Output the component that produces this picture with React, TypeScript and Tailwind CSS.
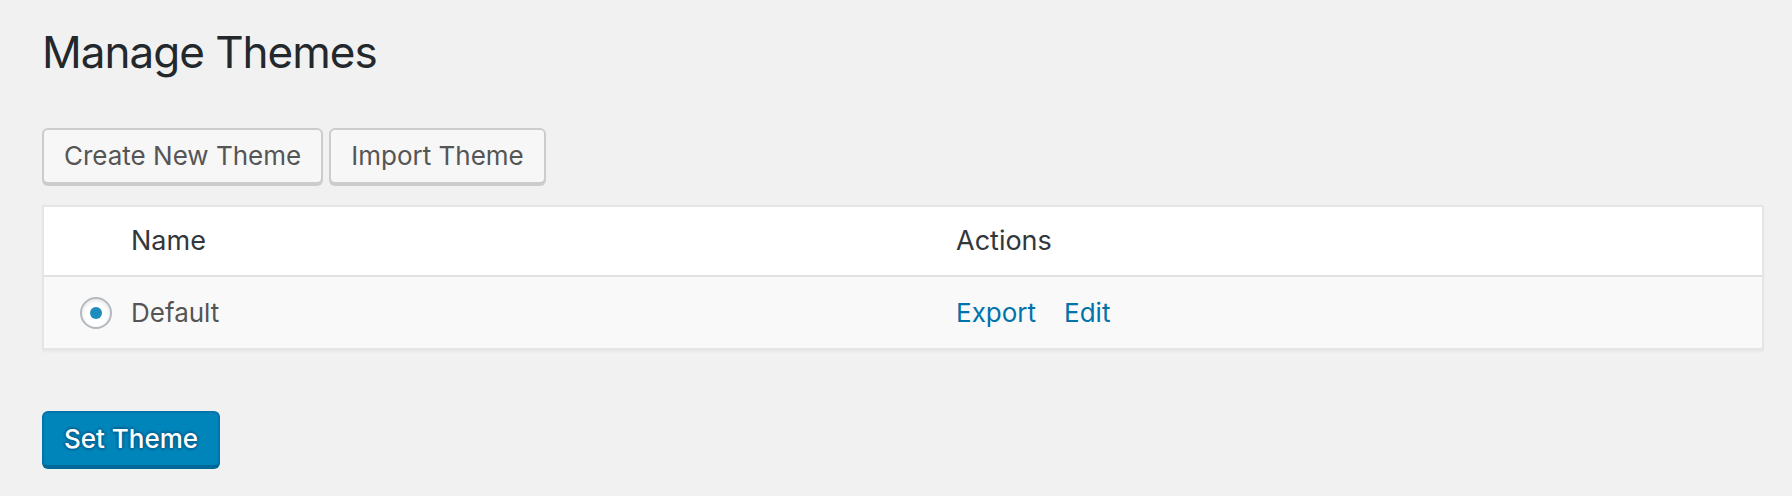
import React from "react";

export default function App() {
  return (
    <div className="min-h-[496px] w-full bg-[#f1f1f1] pl-[42px] pr-[28px] pt-[24px] pb-[20px] font-['Inter','Noto_Sans',sans-serif]">
      <h1 className="m-0 text-[44px] leading-[56px] font-normal text-[#23282d] tracking-[-1px]">
        Manage Themes
      </h1>

      <div className="mt-[48px] flex gap-[6px]">
        <button className="h-[56px] rounded-[6px] border-2 border-[#cccccc] bg-[#f7f7f7] px-[20px] text-[26px] leading-[52px] text-[#555555] shadow-[0_2px_0_#cccccc]">
          Create New Theme
        </button>
        <button className="h-[56px] rounded-[6px] border-2 border-[#cccccc] bg-[#f7f7f7] px-[20px] text-[26px] leading-[52px] text-[#555555] shadow-[0_2px_0_#cccccc]">
          Import Theme
        </button>
      </div>

      <div className="mt-[21px] border-2 border-[#e5e5e5] bg-white shadow-[0_2px_2px_rgba(0,0,0,0.04)]">
        <div className="grid h-[70px] grid-cols-[68px_1fr_1fr] items-center border-b-2 border-[#e1e1e1] bg-white">
          <div />
          <div className="pl-[19px] text-[27px] text-[#32373c]">Name</div>
          <div className="pl-[19px] text-[27px] text-[#32373c]">Actions</div>
        </div>
        <div className="grid h-[71px] grid-cols-[68px_1fr_1fr] items-center bg-[#f9f9f9]">
          <div className="flex items-center pl-[36px]">
            <span className="flex h-[32px] w-[32px] items-center justify-center rounded-full border-2 border-[#b4b9be] bg-white shadow-[inset_0_2px_4px_rgba(0,0,0,0.1)]">
              <span className="h-[12px] w-[12px] rounded-full bg-[#1e8cbe]" />
            </span>
          </div>
          <div className="pl-[19px] text-[26px] text-[#555555]">Default</div>
          <div className="flex gap-[28px] pl-[19px] text-[26px] text-[#0073aa]">
            <a className="cursor-pointer">Export</a>
            <a className="cursor-pointer">Edit</a>
          </div>
        </div>
      </div>

      <div className="mt-[61px]">
        <button className="h-[56px] rounded-[6px] border-2 border-[#0073aa] border-b-[#006799] bg-[#0085ba] px-[20px] text-[26px] font-medium leading-[52px] text-white shadow-[0_2px_0_#006799] [text-shadow:0_-2px_2px_#006799,2px_0_2px_#006799,0_2px_2px_#006799,-2px_0_2px_#006799]">
          Set Theme
        </button>
      </div>
    </div>
  );
}
